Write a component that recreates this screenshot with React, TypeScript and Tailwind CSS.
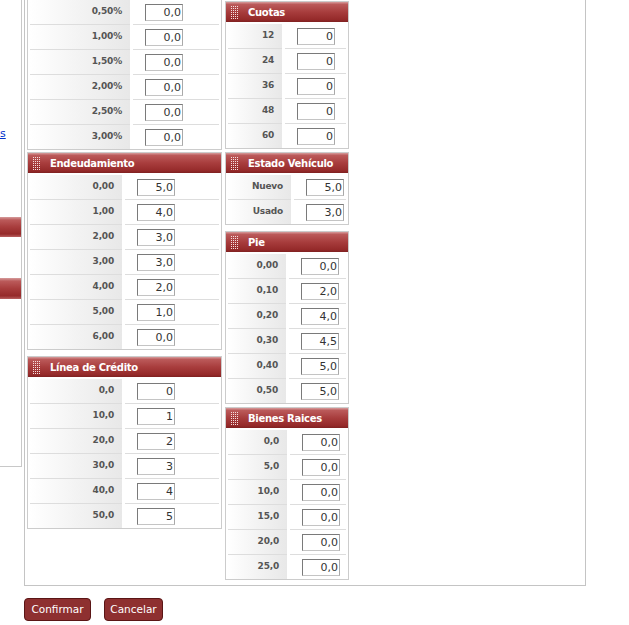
import React from "react";

type Row = { label: string; value: string };

type SectionProps = {
  title?: string;
  rows: Row[];
  labelW: string;
  className?: string;
};

const percentRows: Row[] = [
  { label: "0,50%", value: "0,0" },
  { label: "1,00%", value: "0,0" },
  { label: "1,50%", value: "0,0" },
  { label: "2,00%", value: "0,0" },
  { label: "2,50%", value: "0,0" },
  { label: "3,00%", value: "0,0" },
];

const endeudamiento: Row[] = [
  { label: "0,00", value: "5,0" },
  { label: "1,00", value: "4,0" },
  { label: "2,00", value: "3,0" },
  { label: "3,00", value: "3,0" },
  { label: "4,00", value: "2,0" },
  { label: "5,00", value: "1,0" },
  { label: "6,00", value: "0,0" },
];

const lineaCredito: Row[] = [
  { label: "0,0", value: "0" },
  { label: "10,0", value: "1" },
  { label: "20,0", value: "2" },
  { label: "30,0", value: "3" },
  { label: "40,0", value: "4" },
  { label: "50,0", value: "5" },
];

const cuotas: Row[] = ["12", "24", "36", "48", "60"].map((l) => ({ label: l, value: "0" }));

const estado: Row[] = [
  { label: "Nuevo", value: "5,0" },
  { label: "Usado", value: "3,0" },
];

const pie: Row[] = [
  { label: "0,00", value: "0,0" },
  { label: "0,10", value: "2,0" },
  { label: "0,20", value: "4,0" },
  { label: "0,30", value: "4,5" },
  { label: "0,40", value: "5,0" },
  { label: "0,50", value: "5,0" },
];

const bienes: Row[] = ["0,0", "5,0", "10,0", "15,0", "20,0", "25,0"].map((l) => ({ label: l, value: "0,0" }));

function Grip() {
  const dots = [];
  for (let y = 0; y < 7; y++) {
    for (let x = 0; x < 4; x++) {
      dots.push(<rect key={`${x}-${y}`} x={x * 2} y={y * 2} width="1" height="1" fill="#f6dede" />);
    }
  }
  return (
    <svg width="8" height="13" viewBox="0 0 8 13" className="shrink-0">
      {dots}
    </svg>
  );
}

function Header({ title }: { title: string }) {
  return (
    <div className="flex h-[20px] items-center gap-[9px] bg-[linear-gradient(to_bottom,#d69c9c_0%,#bb5a5a_12%,#a83d3d_50%,#952a2a_88%,#7f2121_100%)] pl-[5px] text-[10px] font-bold tracking-[-0.3px] text-white">
      <Grip />
      <span>{title}</span>
    </div>
  );
}

function Section({ title, rows, labelW, className }: SectionProps) {
  return (
    <div className={`border border-[#cccccc] bg-white ${title ? "" : "border-t-0"} ${className ?? ""}`}>
      {title && <Header title={title} />}
      <div className={`flex flex-col px-[2px] ${title ? "pt-[2px]" : ""}`}>
        {rows.map((r, i) => (
          <div key={i} className="flex h-[25px] gap-[3px] last:h-[24px]">
            <div
              className={`${labelW} flex items-center justify-end bg-[linear-gradient(to_right,#ffffff_0%,#f3f3f3_50%,#e8e8e8_100%)] pr-[8px] text-[9px] font-bold tracking-[-0.2px] text-[#555555] ${
                i < rows.length - 1 ? "border-b border-[#dddddd]" : ""
              }`}
            >
              {r.label}
            </div>
            <div
              className={`flex flex-1 items-center pl-[12px] ${
                i < rows.length - 1 ? "border-b border-[#dddddd]" : ""
              }`}
            >
              <input
                type="text"
                defaultValue={r.value}
                className="h-[17px] w-[38px] border border-t-[#7a7a7a] border-l-[#7a7a7a] border-r-[#a9a9a9] border-b-[#c4c4c4] bg-white pr-[1px] text-right text-[11px] leading-none text-[#333333] outline-none"
              />
            </div>
          </div>
        ))}
      </div>
    </div>
  );
}

export default function App() {
  return (
    <div className="h-[625px] w-[629px] overflow-hidden bg-white font-['DejaVu_Sans',sans-serif]">
      <div className="flex items-start gap-[2px]">
        <aside className="flex h-[467px] w-[22px] flex-col border-r border-b border-[#c8c8c8]">
          <a className="mt-[127px] h-[13px] text-[11px] leading-[13px] text-[#0033cc] underline">s</a>
          <div className="mt-[77px] h-[20px] bg-[linear-gradient(to_bottom,#d69c9c_0%,#bb5a5a_15%,#a83d3d_50%,#952a2a_85%,#b86060_100%)]" />
          <div className="mt-[41px] h-[21px] bg-[linear-gradient(to_bottom,#d69c9c_0%,#bb5a5a_15%,#a83d3d_50%,#952a2a_85%,#b86060_100%)]" />
        </aside>

        <div className="flex flex-col">
          <div className="flex w-[562px] items-start gap-[3px] border-r border-b border-l border-[#c4c4c4] pb-[5px] pl-[2px]">
            <div className="flex w-[195px] flex-col">
              <Section rows={percentRows} labelW="w-[100px]" />
              <Section title="Endeudamiento" rows={endeudamiento} labelW="w-[92px]" className="mt-[2px]" />
              <Section title="Línea de Crédito" rows={lineaCredito} labelW="w-[92px]" className="mt-[6px]" />
            </div>
            <div className="flex w-[124px] flex-col pt-[1px]">
              <Section title="Cuotas" rows={cuotas} labelW="w-[54px]" />
              <Section title="Estado Vehículo" rows={estado} labelW="w-[63px]" className="mt-[3px]" />
              <Section title="Pie" rows={pie} labelW="w-[58px]" className="mt-[6px]" />
              <Section title="Bienes Raices" rows={bienes} labelW="w-[59px]" className="mt-[3px]" />
            </div>
          </div>

          <div className="mt-[12px] flex gap-[13px]">
            <button className="h-[23px] w-[67px] rounded-[4px] border border-[#5a1616] bg-[#8e3030] text-[10.5px] text-white">
              Confirmar
            </button>
            <button className="h-[23px] w-[59px] rounded-[4px] border border-[#5a1616] bg-[#8e3030] text-[10.5px] text-white">
              Cancelar
            </button>
          </div>
        </div>
      </div>
    </div>
  );
}
